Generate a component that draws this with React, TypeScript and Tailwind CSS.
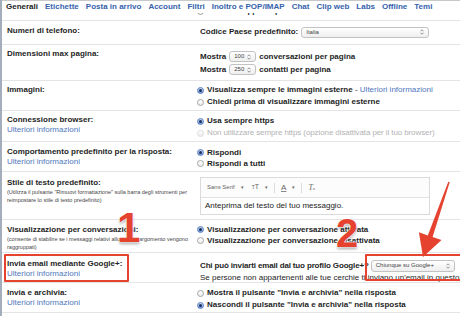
import React from "react";

const tabs = ["Etichette", "Posta in arrivo", "Account", "Filtri", "Inoltro e POP/IMAP", "Chat", "Clip web", "Labs", "Offline", "Temi"];

function Radio({ on, dim }: { on?: boolean; dim?: boolean }) {
  if (on) {
    return (
      <span className="inline-flex items-center justify-center w-[7px] h-[7px] rounded-full border border-[#5b7fbf] bg-gradient-to-b from-[#c9dbf5] to-[#6f9ad8] shrink-0">
        <span className="w-[3px] h-[3px] rounded-full bg-[#1d2f5c]" />
      </span>
    );
  }
  return (
    <span
      className={`inline-block w-[7px] h-[7px] rounded-full border shrink-0 bg-gradient-to-b from-white to-[#ececec] ${
        dim ? "border-[#dcdcdc]" : "border-[#a5a5a5]"
      }`}
    />
  );
}

function Arrows() {
  return (
    <svg width="4" height="6" viewBox="0 0 4 6" className="shrink-0">
      <path d="M0.5 2.3 L2 0.8 L3.5 2.3" fill="none" stroke="#666" strokeWidth="0.7" />
      <path d="M0.5 3.7 L2 5.2 L3.5 3.7" fill="none" stroke="#666" strokeWidth="0.7" />
    </svg>
  );
}

function Select({ label, className }: { label: string; className: string }) {
  return (
    <span
      className={`inline-flex items-center justify-between h-[11px] px-[4px] rounded-[3px] border border-[#c2c2c2] bg-gradient-to-b from-white to-[#eeeeee] text-[6px] font-normal text-[#444] shrink-0 ${className}`}
    >
      <span>{label}</span>
      <Arrows />
    </span>
  );
}

function Link({ children }: { children: React.ReactNode }) {
  return <span className="font-normal text-[#4f77bd]">{children}</span>;
}

function RadioLine({ on, dim, children }: { on?: boolean; dim?: boolean; children: React.ReactNode }) {
  return (
    <div className="flex items-center gap-[3px] whitespace-nowrap">
      <Radio on={on} dim={dim} />
      <span className={dim ? "font-normal text-[#b3b3b3] tracking-[-0.1px]" : "font-bold"}>{children}</span>
    </div>
  );
}

export default function App() {
  return (
    <div className="relative w-[460px] h-[316px] overflow-hidden bg-white text-[#1e1e1e] font-['Liberation_Sans',Arial,sans-serif] text-[8px] border-l-2 border-[#a3adbb]">
      {/* tabs */}
      <div className="flex items-center h-[13px] pl-[4px] gap-[7px] font-bold whitespace-nowrap border-t border-[#c8c8c8]">
        <span className="text-[#222] shrink-0">Generali</span>
        {tabs.map((t) => (
          <span key={t} className="text-[#3562ab] shrink-0">
            {t}
          </span>
        ))}
      </div>

      {/* clipped previous row */}
      <div className="flex h-[8px] overflow-hidden border-b border-[#e4e4e4]">
        <div className="w-[195px] shrink-0" />
        <div className="-mt-[8px] leading-[12px]">
          <RadioLine>Attiva il supporto per caratteri non latini</RadioLine>
        </div>
      </div>

      {/* telefono */}
      <div className="flex h-[24px] border-b border-[#e4e4e4] font-bold">
        <div className="w-[195px] shrink-0 pl-[5px] pt-[4px] leading-[11px]">Numeri di telefono:</div>
        <div className="pl-[3px] flex items-center h-[12px] mt-[5px] gap-[3px] whitespace-nowrap">
          <span>Codice Paese predefinito:</span>
          <Select label="Italia" className="w-[128px]" />
        </div>
      </div>

      {/* dimensioni */}
      <div className="flex h-[36px] border-b border-[#e4e4e4] font-bold">
        <div className="w-[195px] shrink-0 pl-[5px] pt-[3px] leading-[11px]">Dimensioni max pagina:</div>
        <div className="pt-[6px] pl-[3px] flex flex-col gap-[2px] whitespace-nowrap">
          <div className="flex items-center gap-[3px] h-[11px]">
            <span>Mostra</span>
            <Select label="100" className="w-[27px]" />
            <span>conversazioni per pagina</span>
          </div>
          <div className="flex items-center gap-[3px] h-[11px]">
            <span>Mostra</span>
            <Select label="250" className="w-[27px]" />
            <span>contatti per pagina</span>
          </div>
        </div>
      </div>

      {/* immagini */}
      <div className="flex h-[30px] border-b border-[#e4e4e4]">
        <div className="w-[195px] shrink-0 pl-[5px] pt-[3px] leading-[11px] font-bold">Immagini:</div>
        <div className="pt-[3px] leading-[12px]">
          <RadioLine on>
            Visualizza sempre le immagini esterne <span className="font-normal">-</span> <Link>Ulteriori informazioni</Link>
          </RadioLine>
          <RadioLine>Chiedi prima di visualizzare immagini esterne</RadioLine>
        </div>
      </div>

      {/* connessione */}
      <div className="flex h-[31px] border-b border-[#e4e4e4]">
        <div className="w-[195px] shrink-0 pl-[5px] pt-[4px] leading-[10px]">
          <div className="font-bold">Connessione browser:</div>
          <Link>Ulteriori informazioni</Link>
        </div>
        <div className="pt-[4px] leading-[12px]">
          <RadioLine on>Usa sempre https</RadioLine>
          <RadioLine dim>Non utilizzare sempre https (opzione disattivata per il tuo browser)</RadioLine>
        </div>
      </div>

      {/* comportamento */}
      <div className="flex h-[30px] border-b border-[#e4e4e4]">
        <div className="w-[195px] shrink-0 pl-[5px] pt-[5px] leading-[10px]">
          <div className="font-bold">Comportamento predefinito per la risposta:</div>
          <Link>Ulteriori informazioni</Link>
        </div>
        <div className="pt-[5px] leading-[11px]">
          <RadioLine on>Rispondi</RadioLine>
          <RadioLine>Rispondi a tutti</RadioLine>
        </div>
      </div>

      {/* stile */}
      <div className="flex h-[48px] border-b border-[#e4e4e4]">
        <div className="w-[195px] shrink-0 pl-[5px] pt-[6px] leading-[10px]">
          <div className="font-bold">Stile di testo predefinito:</div>
          <div className="text-[5.5px] leading-[8px] text-[#444] whitespace-nowrap">
            (Utilizza il pulsante "Rimuovi formattazione" sulla barra degli strumenti per
            <br />
            reimpostare lo stile di testo predefinito)
          </div>
        </div>
        <div className="pt-[5px] pl-[3px]">
          <div className="w-[230px] border border-[#dadada]">
            <div className="flex items-center h-[20px] px-[6px] gap-[6px] text-[#666] bg-[#fcfcfc] border-b border-[#e2e2e2]">
              <span className="text-[6px]">Sans Serif</span>
              <span className="text-[5px]">▾</span>
              <span className="text-[7px] ml-[2px]">
                <span className="text-[5px]">T</span>T
              </span>
              <span className="text-[5px]">▾</span>
              <span className="w-px h-[10px] bg-[#dcdcdc]" />
              <span className="text-[8px] underline decoration-[#888]">A</span>
              <span className="text-[5px]">▾</span>
              <span className="w-px h-[10px] bg-[#dcdcdc]" />
              <span className="text-[8px] italic font-['Liberation_Serif',serif]">
                T<span className="text-[5px]">x</span>
              </span>
            </div>
            <div className="h-[16px] flex items-center px-[4px] text-[#222] whitespace-nowrap">
              Anteprima del testo del tuo messaggio.
            </div>
          </div>
        </div>
      </div>

      {/* visualizzazione */}
      <div className="flex h-[33px] border-b border-[#e4e4e4]">
        <div className="w-[195px] shrink-0 pl-[5px] pt-[5px] leading-[10px]">
          <div className="font-bold">Visualizzazione per conversazioni:</div>
          <div className="text-[5.5px] leading-[8px] text-[#444] whitespace-nowrap">
            (consente di stabilire se i messaggi relativi allo stesso argomento vengono
            <br />
            raggruppati)
          </div>
        </div>
        <div className="pt-[4px] leading-[11px]">
          <RadioLine on>Visualizzazione per conversazione attivata</RadioLine>
          <RadioLine>Visualizzazione per conversazione disattivata</RadioLine>
        </div>
      </div>

      {/* google+ */}
      <div className="flex h-[30px] border-b border-[#e4e4e4]">
        <div className="w-[195px] shrink-0 pl-[5px] pt-[6px] leading-[10px]">
          <div className="font-bold">Invia email mediante Google+:</div>
          <Link>Ulteriori informazioni</Link>
        </div>
        <div className="pt-[6px] pl-[3px] whitespace-nowrap">
          <div className="flex items-center gap-[2px] h-[13px] font-bold">
            <span className="tracking-[-0.15px]">Chi può inviarti email dal tuo profilo Google+?</span>
            <Select label="Chiunque su Google+" className="w-[84px] h-[12px]" />
          </div>
          <div className="leading-[11px]">
            Se persone non appartenenti alle tue cerchie ti inviano un'email in questo modo
          </div>
        </div>
      </div>

      {/* invia e archivia */}
      <div className="flex h-[30px] border-b border-[#e4e4e4]">
        <div className="w-[195px] shrink-0 pl-[5px] pt-[5px] leading-[10px]">
          <div className="font-bold">Invia e archivia:</div>
          <Link>Ulteriori informazioni</Link>
        </div>
        <div className="pt-[4px] leading-[12px]">
          <RadioLine>Mostra il pulsante "Invia e archivia" nella risposta</RadioLine>
          <RadioLine on>Nascondi il pulsante "Invia e archivia" nella risposta</RadioLine>
        </div>
      </div>

      {/* annotations */}
      <div className="absolute left-[2px] top-[254px] w-[125px] h-[28px] border-2 border-[#e5432f] rounded-[1px]" />
      <div className="absolute left-[363px] top-[254px] w-[100px] h-[27px] border-2 border-[#e5432f] rounded-[1px]" />
      <div className="absolute left-[115px] top-[207px] text-[42px] leading-[42px] font-bold text-[#e5432f] [text-shadow:0_0_2px_#fff,0_0_2px_#fff,0_2px_3px_rgba(0,0,0,0.35)]">
        1
      </div>
      <div className="absolute left-[334px] top-[213px] text-[40px] leading-[40px] font-bold text-[#e5432f] [text-shadow:0_0_2px_#fff,0_0_2px_#fff,0_2px_3px_rgba(0,0,0,0.35)]">
        2
      </div>
      <svg className="absolute left-0 top-0 pointer-events-none" width="460" height="316" viewBox="0 0 460 316">
        <polygon
          points="446.3,181.8 447.7,182.2 430.6,237 439.5,240.1 421,257 416.9,232.3 425.8,235.4"
          fill="#e5432f"
        />
      </svg>
    </div>
  );
}
